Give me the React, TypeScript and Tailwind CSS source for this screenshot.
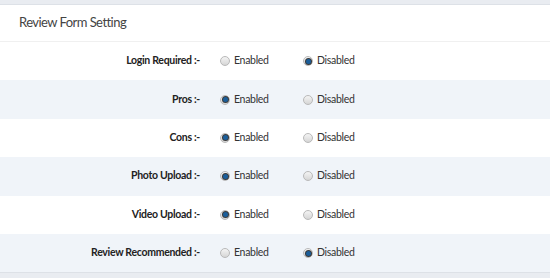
const rows: { label: string; on: boolean }[] = [
  { label: "Login Required", on: false },
  { label: "Pros", on: true },
  { label: "Cons", on: true },
  { label: "Photo Upload", on: true },
  { label: "Video Upload", on: true },
  { label: "Review Recommended", on: false },
]

function Radio({ checked }: { checked: boolean }) {
  return (
    <span className="flex h-[10px] w-[10px] shrink-0 items-center justify-center rounded-full border border-[#b9b9b9] bg-gradient-to-b from-[#f4f4f4] to-[#d6d6d6]">
      {checked && (
        <span className="h-[5px] w-[5px] rounded-full bg-[#1b5e9a] shadow-[0_0_0_1px_#3a3a3a]" />
      )}
    </span>
  )
}

function Option({ checked, text }: { checked: boolean; text: string }) {
  return (
    <label className="flex items-center gap-[4px]">
      <Radio checked={checked} />
      <span>{text}</span>
    </label>
  )
}

export default function App() {
  return (
    <div className="h-[278px] w-[550px] overflow-hidden bg-[#e9ecf1] pt-[4px] font-['Lato',sans-serif] text-[#333]">
      <div className="border-t border-[#dde1e7] bg-white">
        {/* Header */}
        <div className="flex h-[37px] items-center border-b border-[#f0f0f0] pl-[19px] text-[13px] tracking-[-0.55px] text-[#444]">
          Review Form Setting
        </div>

        {/* Settings rows */}
        {rows.map((r, i) => (
          <div
            key={r.label}
            className={`flex h-[38.4px] items-center text-[10.5px] tracking-[-0.3px] ${i % 2 ? "bg-[#f0f4f9]" : "bg-white"}`}
          >
            <div className="w-[200px] text-right font-bold text-[#222]">{r.label} :-</div>
            <div className="ml-[20px] w-[83px]">
              <Option checked={r.on} text="Enabled" />
            </div>
            <Option checked={!r.on} text="Disabled" />
          </div>
        ))}
      </div>
      <div className="border-t border-[#dde1e7]" />
    </div>
  )
}
